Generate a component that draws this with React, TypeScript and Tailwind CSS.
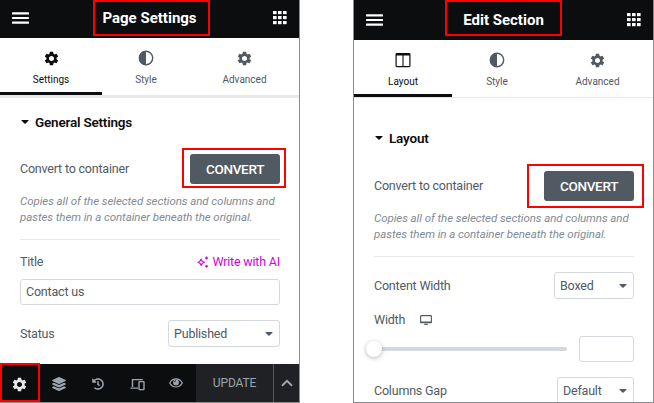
import React from "react";
import { MdSettings } from "react-icons/md";
import { FaHistory, FaLayerGroup } from "react-icons/fa";

function Header({ title, tall }: { title: string; tall?: boolean }) {
  return (
    <header
      className={`flex shrink-0 items-center justify-between bg-[#0c0d0e] pl-3 pr-3 text-white ${tall ? "h-10" : "h-[38px] pb-0.5"}`}
    >
      <svg width="17" height="12" viewBox="0 0 17 12" fill="currentColor">
        <rect y="0.2" width="17" height="2.2" rx="0.5" />
        <rect y="4.9" width="17" height="2.2" rx="0.5" />
        <rect y="9.6" width="17" height="2.2" rx="0.5" />
      </svg>
      <h1 className="mr-[3px] whitespace-nowrap text-[15px] font-bold leading-5 tracking-normal">{title}</h1>
      <svg width="14" height="14" viewBox="0 0 14 14" fill="currentColor">
        {[0, 5, 10].map((y) =>
          [0, 5, 10].map((x) => <rect key={`${x}-${y}`} x={x} y={y} width="3.6" height="3.2" />)
        )}
      </svg>
    </header>
  );
}

function Contrast() {
  return (
    <svg width="16" height="16" viewBox="0 0 16 16">
      <circle cx="8" cy="8" r="6.7" fill="none" stroke="currentColor" strokeWidth="1.4" />
      <path d="M8 1A7 7 0 0 0 8 15Z" fill="currentColor" />
    </svg>
  );
}

function Columns() {
  return (
    <svg width="16" height="16" viewBox="0 0 16 16" fill="none" stroke="currentColor">
      <rect x="1.1" y="1.6" width="13.8" height="13" rx="0.8" strokeWidth="1.2" />
      <path d="M1 2.5H15" strokeWidth="2" />
      <path d="M8 2V14.5" strokeWidth="1.1" />
    </svg>
  );
}

function Tab({ icon, label, className }: { icon: React.ReactNode; label: string; className: string }) {
  return (
    <div className={`flex flex-col items-center pt-3 ${className}`}>
      <span className="flex h-4 items-center">{icon}</span>
      <span className="mt-[5px] text-[10px] leading-[17px] tracking-normal">{label}</span>
    </div>
  );
}

function Caret() {
  return (
    <svg width="8" height="4" viewBox="0 0 8 4" fill="currentColor" className="shrink-0">
      <path d="M0.8 0H7.2Q8 0 7.4 .7L4.6 3.6Q4 4.1 3.4 3.6L.6 .7Q0 0 .8 0Z" />
    </svg>
  );
}

function Heading({ text }: { text: string }) {
  return (
    <div className="flex h-5 items-center text-[#0c0d0e]">
      <span className="ml-px flex">
        <Caret />
      </span>
      <h2 className="ml-1.5 text-[13.5px] font-semibold leading-5 tracking-[-0.2px]">{text}</h2>
    </div>
  );
}

function Select({ value, className }: { value: string; className: string }) {
  return (
    <div
      className={`flex h-[27px] shrink-0 items-center justify-between rounded-[3px] border border-[#d5d8dc] pl-[5px] pr-1.5 ${className}`}
    >
      <span>{value}</span>
      <Caret />
    </div>
  );
}

function Convert() {
  return (
    <>
      <div className="flex h-[30px] items-center justify-between">
        <span>Convert to container</span>
        <button className="h-[30px] w-[90px] rounded-[3px] bg-[#515962] pb-px text-[13.5px] font-medium tracking-[-0.3px] text-white">
          CONVERT
        </button>
      </div>
      <p className="mt-[9px] whitespace-nowrap text-[11.5px] italic leading-4 tracking-[-0.07px] text-[#818a96]">
        Copies all of the selected sections and columns and
        <br />
        pastes them in a container beneath the original.
      </p>
      <hr className="mt-[14px] border-[#e6e8ea]" />
    </>
  );
}

function Devices() {
  return (
    <svg width="15" height="13" viewBox="0 0 15 13" fill="none" stroke="currentColor" strokeWidth="1.4">
      <path d="M2.5 9V1.6H12.8M0.5 10.1H8" />
      <rect x="9" y="3.6" width="5" height="8" rx="0.7" />
    </svg>
  );
}

function Eye() {
  return (
    <svg width="14" height="10" viewBox="0 0 14 10" fill="none" stroke="currentColor" strokeWidth="1.2" className="mb-0.5">
      <path d="M.7 5C3.6-.4 10.4-.4 13.3 5C10.4 10.3 3.6 10.3 .7 5Z" />
      <circle cx="7" cy="4.4" r="2.9" fill="currentColor" stroke="none" />
      <path d="M5.4 4.2Q5.5 2.8 7 2.7" stroke="#0c0d0e" strokeWidth=".8" />
    </svg>
  );
}

function Sparkles() {
  return (
    <svg width="12" height="12" viewBox="0 0 12 12" fill="none" stroke="currentColor" strokeWidth="1.1">
      <path d="M4.2 2.7Q4.6 5.8 7.7 6.2Q4.6 6.6 4.2 9.7Q3.8 6.6 .7 6.2Q3.8 5.8 4.2 2.7Z" />
      <path d="M9.5 .5Q9.7 1.8 11 2Q9.7 2.2 9.5 3.5Q9.3 2.2 8 2Q9.3 1.8 9.5 .5ZM9.5 8.8Q9.7 10 11 10.2Q9.7 10.4 9.5 11.6Q9.3 10.4 8 10.2Q9.3 10 9.5 8.8Z" strokeWidth=".6" fill="currentColor" />
    </svg>
  );
}

function PageSettings() {
  return (
    <section className="relative flex h-[403px] w-[300px] flex-col overflow-hidden border-b border-r border-[#8b8c8e] bg-white">
      <Header title="Page Settings" />
      <nav className="flex h-[60px] shrink-0 border-b-[3px] border-[#e6e8ea]">
        <Tab icon={<MdSettings size={17} />} label="Settings" className="w-[102px] border-b-[3px] border-[#0c0d0e] text-[#0c0d0e]" />
        <Tab icon={<Contrast />} label="Style" className="w-[88px]" />
        <Tab icon={<MdSettings size={17} />} label="Advanced" className="w-[109px]" />
      </nav>
      <div className="flex flex-col pl-5 pr-[19px] pt-[14px]">
        <Heading text="General Settings" />
        <div className="h-[22px]" />
        <Convert />
        <div className="mt-3 flex h-5 items-center justify-between">
          <span>Title</span>
          <span className="flex items-center gap-[3px] text-[#d004d4]">
            <Sparkles />
            Write with AI
          </span>
        </div>
        <div className="mt-[7px] flex h-[26px] items-center rounded-[3px] border border-[#d5d8dc] pl-[5px]">Contact us</div>
        <div className="mt-[15px] flex items-center justify-between">
          <span>Status</span>
          <Select value="Published" className="w-28" />
        </div>
      </div>
      <footer className="mt-auto flex h-[38px] shrink-0 bg-[#0c0d0e] text-[#9da5ae]">
        <div className="grid w-[196px] grid-cols-5 items-center justify-items-center pt-0.5">
          <MdSettings size={17} className="text-[#e6e8ea]" />
          <FaLayerGroup size={14} />
          <FaHistory size={12} />
          <Devices />
          <Eye />
        </div>
        <div className="flex w-[78px] items-center justify-center border-r border-[#515962] bg-[#1f2124] text-[12px] tracking-[-0.15px]">UPDATE</div>
        <div className="flex flex-1 items-center justify-center bg-[#1f2124]">
          <svg width="12" height="8" viewBox="0 0 12 8" fill="none" stroke="currentColor" strokeWidth="2">
            <path d="M1 6.8L6 1.8L11 6.8" />
          </svg>
        </div>
      </footer>
      <div className="absolute left-[93px] top-0 h-9 w-[117px] border-2 border-[#f00]" />
      <div className="absolute left-[182px] top-[148px] h-10 w-[104px] border-2 border-[#f00]" />
      <div className="absolute left-0 top-[363px] h-[39px] w-10 border-2 border-[#f00]" />
    </section>
  );
}

function EditSection() {
  return (
    <section className="relative flex h-[403px] w-[301px] flex-col overflow-hidden border-x border-b border-[#8b8c8e] bg-white">
      <Header title="Edit Section" tall />
      <nav className="flex h-[58px] shrink-0 border-b border-[#e6e8ea]">
        <Tab icon={<Columns />} label="Layout" className="w-[98px] border-b-[3px] border-[#0c0d0e] text-[#0c0d0e]" />
        <Tab icon={<Contrast />} label="Style" className="w-[90px]" />
        <Tab icon={<MdSettings size={17} />} label="Advanced" className="w-[111px]" />
      </nav>
      <div className="flex flex-col pl-5 pr-[19px] pt-[30px]">
        <Heading text="Layout" />
        <div className="h-[23px]" />
        <Convert />
        <div className="mt-[15px] flex items-center justify-between">
          <span>Content Width</span>
          <Select value="Boxed" className="w-20" />
        </div>
        <div className="mt-[11px] flex h-5 items-center gap-[15px]">
          <span>Width</span>
          <svg width="12" height="10" viewBox="0 0 12 10" fill="none" stroke="currentColor">
            <rect x=".6" y=".6" width="10.8" height="7.2" rx=".6" strokeWidth="1.1" />
            <path d="M.5 7.3H11.5M4.3 9.4H7.7" strokeWidth="1.4" />
          </svg>
        </div>
        <div className="mt-[6px] flex h-[26px] items-center justify-between">
          <div className="flex h-1 w-[193px] items-center rounded-r-sm bg-[#d5d8dc]">
            <div className="-ml-2 h-4 w-4 rounded-full bg-white shadow-[0_1px_4px_rgba(0,0,0,0.3)]" />
          </div>
          <div className="h-[26px] w-[55px] rounded-[3px] border border-[#d5d8dc]" />
        </div>
        <div className="mt-[15px] flex items-center justify-between">
          <span>Columns Gap</span>
          <Select value="Default" className="w-[77px]" />
        </div>
      </div>
      <div className="absolute left-[91px] top-0 h-9 w-[117px] border-2 border-[#f00]" />
      <div className="absolute left-[173px] top-[164px] h-11 w-[117px] border-2 border-[#f00]" />
    </section>
  );
}

export default function App() {
  return (
    <main className="flex h-[403px] w-[654px] justify-between overflow-hidden bg-white font-['Roboto',sans-serif] text-[12.5px] leading-5 tracking-[-0.2px] text-[#515962]">
      <PageSettings />
      <EditSection />
    </main>
  );
}
